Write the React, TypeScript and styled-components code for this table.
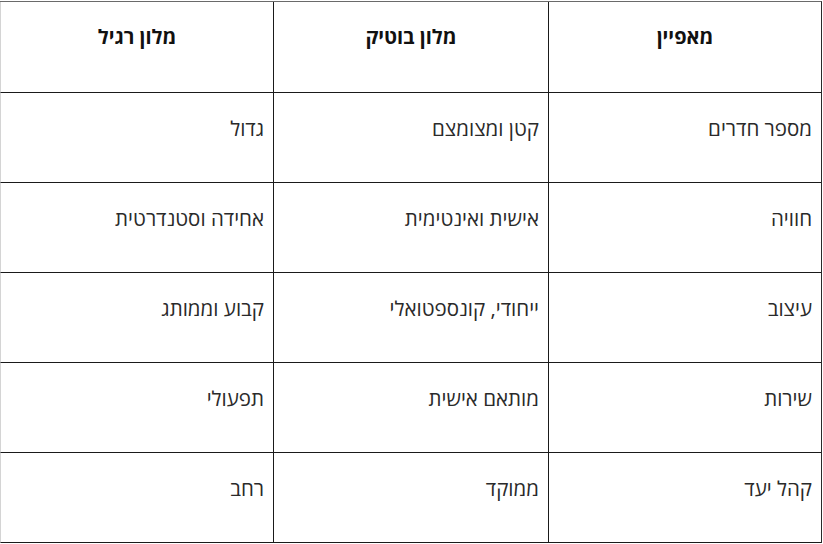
import React from "react";
import styled, { createGlobalStyle } from "styled-components";

const GlobalStyle = createGlobalStyle`
  html, body {
    margin: 0;
    padding: 0;
    background: #ffffff;
  }
  body {
    font-family: "Open Sans", "Noto Sans", "DejaVu Sans", sans-serif;
  }
`;

const Page = styled.div`
  padding-top: 1px;
  width: 823px;
  height: 543px;
  background: #ffffff;
`;

const Table = styled.div`
  direction: rtl;
  display: grid;
  grid-template-columns: 273px 275px 273px;
  grid-auto-rows: 90px;
  grid-template-rows: 91px;
  width: 822px;
  border-top: 1px solid #6a6a6a;
  border-right: 1px solid #2a2a2a;
  box-sizing: border-box;
`;

const Cell = styled.div<{ $head?: boolean; $last?: boolean }>`
  box-sizing: border-box;
  border-bottom: 1px solid #1a1a1a;
  border-left: 1px solid ${(p) => (p.$last ? "#d4d4d4" : "#1a1a1a")};
  padding: ${(p) => (p.$head ? "21px 8px 0 8px" : "21px 9px 0 9px")};
  font-size: ${(p) => (p.$head ? "20px" : "20.5px")};
  line-height: 28px;
  color: ${(p) => (p.$head ? "#111111" : "#2a2a2a")};
  font-weight: ${(p) => (p.$head ? 700 : 400)};
  text-align: ${(p) => (p.$head ? "center" : "right")};
`;

const headers = ["מאפיין", "מלון בוטיק", "מלון רגיל"];

const rows: string[][] = [
  ["מספר חדרים", "קטן ומצומצם", "גדול"],
  ["חוויה", "אישית ואינטימית", "אחידה וסטנדרטית"],
  ["עיצוב", "ייחודי, קונספטואלי", "קבוע וממותג"],
  ["שירות", "מותאם אישית", "תפעולי"],
  ["קהל יעד", "ממוקד", "רחב"],
];

export default function App() {
  return (
    <>
      <GlobalStyle />
      <Page>
        <Table>
          {headers.map((h, i) => (
            <Cell key={h} $head $last={i === 2}>
              {h}
            </Cell>
          ))}
          {rows.map((r) =>
            r.map((c, i) => (
              <Cell key={r[0] + i} $last={i === 2}>
                {c}
              </Cell>
            ))
          )}
        </Table>
      </Page>
    </>
  );
}
